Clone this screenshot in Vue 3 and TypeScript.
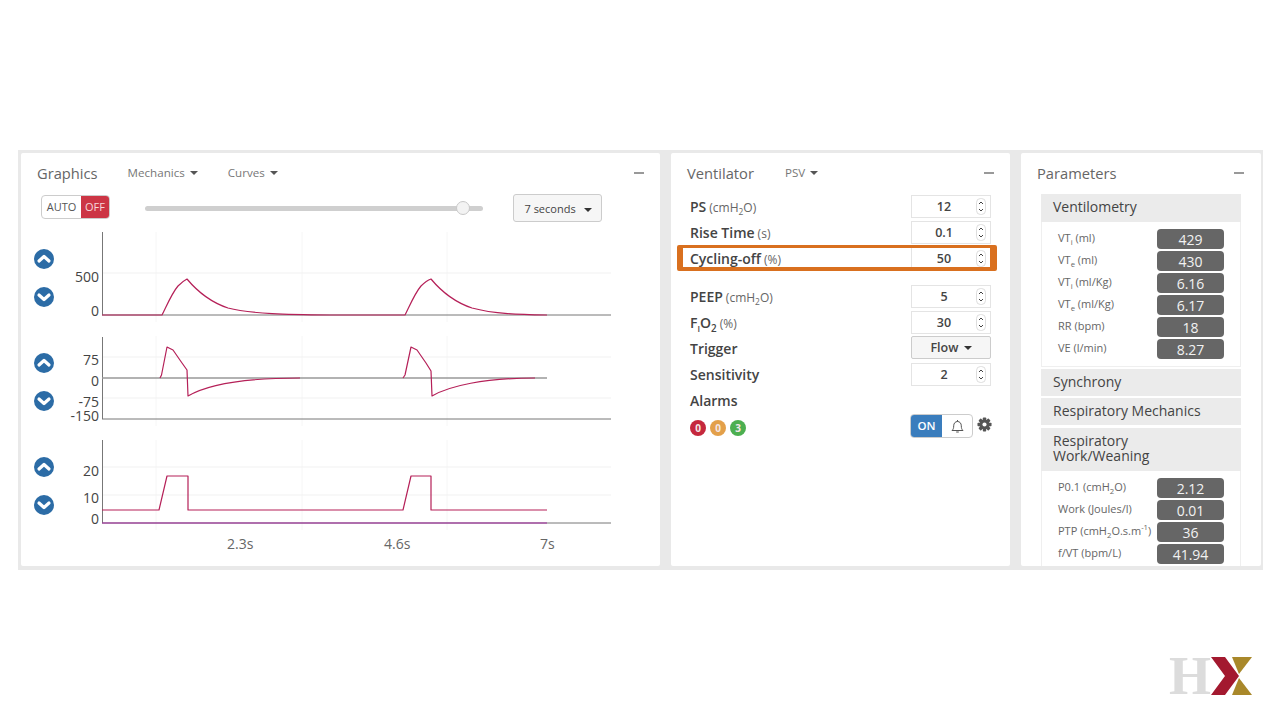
<template>
  <div class="page">
    <div class="dash">
      <section class="panel graphics">
        <header class="panel-head">
          <h2 class="panel-title">Graphics</h2>
          <span class="menu menu--mechanics">Mechanics <i class="caret"></i></span>
          <span class="menu menu--curves">Curves <i class="caret"></i></span>
          <span class="minus"></span>
        </header>

        <div class="graphics-tools">
          <div class="auto-toggle">
            <span class="auto-toggle-auto">AUTO</span>
            <span class="auto-toggle-off">OFF</span>
          </div>
          <div class="slider">
            <span class="slider-thumb"></span>
          </div>
          <button class="seconds-btn">7 seconds <i class="caret caret--dark"></i></button>
        </div>

        <div v-for="chart in charts" :key="chart.top" class="chart-row">
          <div class="chart-btns">
            <svg v-for="dir in ['M5 12 10 7.5 15 12', 'M5 8 10 12.5 15 8']" :key="dir" class="round-btn" viewBox="0 0 20 20">
              <circle cx="10" cy="10" r="10" fill="#2c6ca6" />
              <path :d="dir" fill="none" stroke="#fff" stroke-width="3.2" stroke-linecap="round" stroke-linejoin="round" />
            </svg>
          </div>
          <svg class="plot" width="580" height="104" :viewBox="`60 ${chart.top} 580 104`">
            <line v-for="x in [156, 302, 447]" :key="x" :x1="x" :x2="x" :y1="chart.top + 6" :y2="chart.top + 96" stroke="#f6f6f6" />
            <line v-for="y in chart.grid" :key="y" x1="102" x2="611" :y1="y" :y2="y" stroke="#f1f1f1" />
            <line x1="102.5" x2="102.5" :y1="chart.axisTop" :y2="chart.base" stroke="#777" />
            <line x1="102" x2="611" :y1="chart.base" :y2="chart.base" stroke="#777" />
            <line v-if="chart.zero" x1="102" x2="547" :y1="chart.zero" :y2="chart.zero" stroke="#999" stroke-width="1.6" />
            <line v-if="chart.purple" x1="102" x2="547" :y1="chart.purple" :y2="chart.purple" stroke="#a3259f" stroke-width="1.2" />
            <path :d="chart.curve" fill="none" :stroke="chart.stroke" stroke-width="1.2" stroke-linejoin="round" />
            <text v-for="t in chart.ticks" :key="t.label" x="99" :y="t.y" class="tick">{{ t.label }}</text>
          </svg>
        </div>

        <div class="time-axis">
          <span v-for="t in times" :key="t.label" class="time-label" :style="{ width: t.width + 'px' }">{{ t.label }}</span>
        </div>
      </section>

      <section class="panel ventilator">
        <header class="panel-head">
          <h2 class="panel-title">Ventilator</h2>
          <span class="menu menu--psv">PSV <i class="caret"></i></span>
          <span class="minus"></span>
        </header>

        <div class="vent-rows">
          <div
            v-for="row in ventRows"
            :key="row.name"
            class="vent-row"
            :class="{ 'vent-row--hot': row.hot, 'vent-row--gap': row.gap }"
          >
            <span class="vent-label">{{ row.name }}<sub v-if="row.nameSub" class="sub-i">{{ row.nameSub }}</sub><span v-if="row.nameTail">{{ row.nameTail }}</span><sub v-if="row.nameTailSub">{{ row.nameTailSub }}</sub><small v-if="row.unit" class="vent-unit">({{ row.unit }}<sub v-if="row.unitSub">{{ row.unitSub }}</sub>{{ row.unitTail }})</small></span>
            <div v-if="row.value" class="num-input">
              <span class="num-value">{{ row.value }}</span>
              <svg class="spin" width="10" height="17" viewBox="0 0 10 17">
                <rect x="0.5" y="0.5" width="9" height="16" rx="4" fill="#fff" stroke="#ddd" />
                <path d="M3 6 5 4 7 6M3 11 5 13 7 11" fill="none" stroke="#444" stroke-width="1" />
              </svg>
            </div>
            <button v-else-if="row.select" class="flow-btn">{{ row.select }} <i class="caret caret--dark"></i></button>
          </div>

          <div class="vent-row vent-row--alarm">
            <span class="vent-label">Alarms</span>
          </div>
          <div class="alarm-foot">
            <div class="badges">
              <span class="badge badge--red">0</span>
              <span class="badge badge--amber">0</span>
              <span class="badge badge--green">3</span>
            </div>
            <div class="bell-toggle">
              <span class="bell-toggle-on">ON</span>
              <span class="bell-toggle-bell">
                <svg width="13" height="15" viewBox="0 0 13 15">
                  <path d="M1 11.5c1.3-1.2 1.7-2.4 1.7-4.7 0-2.5 1.6-4.3 3.8-4.3s3.8 1.8 3.8 4.3c0 2.3.4 3.5 1.7 4.7zM6.5 2.500V1M5.200 13h2.600" fill="none" stroke="#555" stroke-width="1" />
                </svg>
              </span>
            </div>
            <svg class="gear" width="15" height="15" viewBox="0 0 16 16">
              <rect v-for="a in [0, 45, 90, 135]" :key="a" x="6.200" y="0.500" width="3.600" height="15" rx="0.800" fill="#555" :transform="`rotate(${a} 8 8)`" />
              <circle cx="8" cy="8" r="5.400" fill="#555" />
              <circle cx="8" cy="8" r="2.200" fill="#fff" />
            </svg>
          </div>
        </div>
      </section>

      <section class="panel parameters">
        <header class="panel-head">
          <h2 class="panel-title">Parameters</h2>
          <span class="minus"></span>
        </header>

        <div class="accordion">
          <div class="acc-head acc-head--open">Ventilometry</div>
          <div class="acc-body acc-body--first">
            <div v-for="p in ventilometry" :key="p.id" class="param-row">
              <span class="param-label">{{ p.name }}<sub v-if="p.sub">{{ p.sub }}</sub> ({{ p.unit }}<sub v-if="p.unitSub">{{ p.unitSub }}</sub>{{ p.tail }}<sup v-if="p.sup">{{ p.sup }}</sup>)</span>
              <span class="param-value">{{ p.value }}</span>
            </div>
          </div>
          <div class="acc-head acc-head--next">Synchrony</div>
          <div class="acc-head acc-head--next">Respiratory Mechanics</div>
          <div class="acc-head acc-head--next acc-head--tall">Respiratory<br />Work/Weaning</div>
          <div class="acc-body">
            <div v-for="p in work" :key="p.id" class="param-row">
              <span class="param-label">{{ p.name }}<sub v-if="p.sub">{{ p.sub }}</sub> ({{ p.unit }}<sub v-if="p.unitSub">{{ p.unitSub }}</sub>{{ p.tail }}<sup v-if="p.sup">{{ p.sup }}</sup>)</span>
              <span class="param-value">{{ p.value }}</span>
            </div>
          </div>
        </div>
      </section>
    </div>

    <footer class="brand">
      <span class="brand-h">H</span>
      <svg class="brand-x" width="42" height="38" viewBox="0 0 42 38">
        <polygon points="0,0 14,0 28,19 14,38 0,38 14,19" fill="#a3192f" />
        <polygon points="21,0 41,0 28,17" fill="#a9882a" />
        <polygon points="28,21 41,38 21,38" fill="#a9882a" />
      </svg>
    </footer>
  </div>
</template>

<script setup lang="ts">
interface Tick {
  label: string;
  y: number;
}

interface Chart {
  top: number;
  axisTop: number;
  base: number;
  zero?: number;
  purple?: number;
  grid: number[];
  ticks: Tick[];
  curve: string;
  stroke: string;
}

interface VentRow {
  name: string;
  nameSub?: string;
  nameTail?: string;
  nameTailSub?: string;
  unit?: string;
  unitSub?: string;
  unitTail?: string;
  value?: string;
  select?: string;
  hot?: boolean;
  gap?: boolean;
}

interface Param {
  id: string;
  name: string;
  sub?: string;
  unit: string;
  unitSub?: string;
  tail?: string;
  sup?: string;
  value: string;
}

const charts: Chart[] = [
  {
    top: 226,
    axisTop: 232,
    base: 315,
    grid: [273],
    ticks: [
      { label: "500", y: 282 },
      { label: "0", y: 316 },
    ],
    curve:
      "M102 315H162C167 305 172 293 178 286C182 282 185 280 187 279C197 291 210 302 228 308C250 314 290 314.500 330 315H405C410 305 415 293 421 286C425 282 428 280 431 279C441 291 454 302 472 308C494 314 520 314.500 547 315",
    stroke: "#b52058",
  },
  {
    top: 330,
    axisTop: 337,
    base: 419,
    zero: 378,
    grid: [357, 398],
    ticks: [
      { label: "75", y: 365 },
      { label: "0", y: 386 },
      { label: "-75", y: 407 },
      { label: "-150", y: 421 },
    ],
    curve:
      "M160 378 161.500 375 167 347 173 350 182 363 187 370 188 396C205 386 240 378 300 378M403 378 405 375 411 347 417 350 426 363 431 371 432 396C449 386 484 378 535 378",
    stroke: "#b52058",
  },
  {
    top: 434,
    axisTop: 440,
    base: 523,
    purple: 523,
    grid: [467, 495],
    ticks: [
      { label: "20", y: 476 },
      { label: "10", y: 503 },
      { label: "0", y: 524 },
    ],
    curve: "M102 510H159L167 476H188V510H403L411 476H431V510H547",
    stroke: "#b52058",
  },
];

// widths are the distance between label starts on the time axis
const times = [
  { label: "2.3s", width: 157 },
  { label: "4.6s", width: 156 },
  { label: "7s", width: 40 },
];

const ventRows: VentRow[] = [
  { name: "PS", unit: "cmH", unitSub: "2", unitTail: "O", value: "12" },
  { name: "Rise Time", unit: "s", value: "0.1" },
  { name: "Cycling-off", unit: "%", value: "50", hot: true },
  { name: "PEEP", unit: "cmH", unitSub: "2", unitTail: "O", value: "5", gap: true },
  { name: "F", nameSub: "I", nameTail: "O", nameTailSub: "2", unit: "%", value: "30" },
  { name: "Trigger", select: "Flow" },
  { name: "Sensitivity", value: "2" },
];

const ventilometry: Param[] = [
  { id: "vti", name: "VT", sub: "i", unit: "ml", value: "429" },
  { id: "vte", name: "VT", sub: "e", unit: "ml", value: "430" },
  { id: "vtik", name: "VT", sub: "i", unit: "ml/Kg", value: "6.16" },
  { id: "vtek", name: "VT", sub: "e", unit: "ml/Kg", value: "6.17" },
  { id: "rr", name: "RR", unit: "bpm", value: "18" },
  { id: "ve", name: "VE", unit: "l/min", value: "8.27" },
];

const work: Param[] = [
  { id: "p01", name: "P0.1", unit: "cmH", unitSub: "2", tail: "O", value: "2.12" },
  { id: "work", name: "Work", unit: "Joules/l", value: "0.01" },
  { id: "ptp", name: "PTP", unit: "cmH", unitSub: "2", tail: "O.s.m", sup: "-1", value: "36" },
  { id: "fvt", name: "f/VT", unit: "bpm/L", value: "41.94" },
];
</script>

<style>
html,
body {
  margin: 0;
  background: #fff;
}
</style>

<style scoped>
.page {
  width: 1280px;
  height: 720px;
  box-sizing: border-box;
  padding: 150px 0 0 18px;
  overflow: hidden;
  font-family: "Open Sans", "Noto Sans", sans-serif;
  color: #444;
}

.dash {
  display: flex;
  gap: 11px;
  width: 1245px;
  height: 420px;
  box-sizing: border-box;
  padding: 3px 2px 4px 3px;
  background: #e9e9e9;
}

.panel {
  height: 413px;
  box-sizing: border-box;
  background: #fff;
  border-radius: 2px;
  overflow: hidden;
}

.graphics {
  width: 639px;
  padding: 0 16px;
}

.ventilator {
  width: 339px;
  padding: 0 16px;
}

.parameters {
  width: 240px;
  padding: 0 17px 0 16px;
}

.panel-head {
  display: flex;
  align-items: center;
  height: 39px;
}

.panel-title {
  margin: 0;
  font-size: 14.700px;
  font-weight: 400;
  color: #666;
}

.menu {
  font-size: 11.600px;
  color: #777;
}

.menu--mechanics {
  margin-left: 30px;
}

.menu--curves {
  margin-left: 30px;
}

.menu--psv {
  margin-left: 31px;
}

.caret {
  display: inline-block;
  width: 0;
  height: 0;
  margin-left: 2px;
  vertical-align: 2px;
  border-top: 4px solid #555;
  border-left: 4px solid transparent;
  border-right: 4px solid transparent;
}

.caret--dark {
  border-top-color: #333;
}

.minus {
  width: 10px;
  height: 2px;
  margin-left: auto;
  background: #999;
}

.graphics-tools {
  display: flex;
  align-items: center;
  height: 28px;
  padding-left: 4px;
  margin: 2px 0 4px;
}

.auto-toggle {
  display: flex;
  width: 69px;
  height: 24px;
  box-sizing: border-box;
  margin-top: -2px;
  border: 1px solid #ccc;
  border-radius: 4px;
  overflow: hidden;
  font-size: 11px;
  line-height: 22px;
}

.auto-toggle-auto {
  width: 39px;
  text-align: center;
  color: #555;
}

.auto-toggle-off {
  flex: 1;
  text-align: center;
  background: #cc3545;
  color: #f6d8db;
}

.slider {
  position: relative;
  width: 338px;
  height: 5px;
  margin-left: 35px;
  background: #cfcfcf;
  border-radius: 3px;
}

.slider-thumb {
  position: absolute;
  left: 311px;
  top: -4.500px;
  width: 14px;
  height: 14px;
  box-sizing: border-box;
  background: #f3f3f3;
  border: 1px solid #c8c8c8;
  border-radius: 50%;
}

.seconds-btn {
  width: 89px;
  height: 28px;
  margin-left: 30px;
  padding: 0 0 0 1px;
  background: #f6f6f6;
  border: 1px solid #ccc;
  border-radius: 3px;
  font-family: inherit;
  font-size: 11px;
  color: #444;
}

.seconds-btn .caret {
  margin-left: 5px;
  vertical-align: 1px;
}

.chart-row {
  display: flex;
  align-items: center;
  height: 104px;
}

.chart-btns {
  display: flex;
  flex: none;
  flex-direction: column;
  gap: 18px;
  width: 20px;
  margin: 0 6px 0 -3px;
}

.round-btn {
  width: 20px;
  height: 20px;
}

.plot {
  display: block;
  flex: none;
}

.tick {
  font-size: 14px;
  fill: #444;
  text-anchor: end;
}

.time-axis {
  display: flex;
  margin: -3px 0 0 190px;
  line-height: 18px;
}

.time-label {
  flex: none;
  font-size: 14px;
  color: #666;
}

.vent-rows {
  margin-top: 1px;
  padding-left: 3px;
}

.vent-row {
  position: relative;
  display: flex;
  align-items: center;
  justify-content: space-between;
  height: 26px;
  padding-right: 3px;
}

.vent-row--gap {
  margin-top: 12px;
}

/* orange highlight sits over the row */
.vent-row--hot::after {
  content: "";
  position: absolute;
  inset: 0 -3px 0 -13px;
  border-style: solid;
  border-color: #d9701f;
  border-width: 3px 7px 4px 6px;
  border-radius: 2px;
  pointer-events: none;
}

.vent-label {
  font-size: 14px;
  font-weight: 600;
  color: #444;
}

.vent-unit {
  margin-left: 3px;
  font-size: 12px;
  font-weight: 400;
  color: #666;
}

sub,
sup {
  font-size: 70%;
  line-height: 0;
}

.sub-i {
  font-size: 60%;
}

.num-input {
  position: relative;
  display: flex;
  align-items: center;
  justify-content: center;
  width: 80px;
  height: 23px;
  box-sizing: border-box;
  border: 1px solid #e4e4e4;
}

.num-value {
  width: 66px;
  margin-right: 14px;
  text-align: center;
  font-size: 12.500px;
  font-weight: 600;
  color: #444;
}

.spin {
  position: absolute;
  right: 4px;
  top: 2px;
}

.flow-btn {
  width: 80px;
  height: 23px;
  margin-top: -2px;
  padding: 0;
  background: #f6f6f6;
  border: 1px solid #ccc;
  border-radius: 2px;
  font-family: inherit;
  font-size: 12.500px;
  font-weight: 600;
  color: #444;
}

.alarm-foot {
  display: flex;
  align-items: flex-start;
  margin-top: 1px;
}

.badges {
  display: flex;
  gap: 4px;
  margin-top: 6px;
}

.badge {
  width: 16px;
  height: 16px;
  border-radius: 50%;
  text-align: center;
  font-size: 10px;
  font-weight: 700;
  line-height: 16px;
  color: #f3e7e7;
}

.badge--red {
  background: #c5283d;
}

.badge--amber {
  background: #e3a04a;
}

.badge--green {
  background: #4caf50;
}

.bell-toggle {
  display: flex;
  width: 63px;
  height: 24px;
  box-sizing: border-box;
  margin-left: 164px;
  border: 1px solid #ccc;
  border-radius: 4px;
  overflow: hidden;
}

.bell-toggle-on {
  width: 31px;
  background: #3a7dbd;
  color: #fff;
  text-align: center;
  font-size: 11.500px;
  font-weight: 600;
  line-height: 22px;
}

.bell-toggle-bell {
  display: flex;
  flex: 1;
  align-items: center;
  justify-content: center;
}

.gear {
  margin: 3px 0 0 4px;
}

.accordion {
  margin: 2px 3px 0 4px;
}

.acc-head {
  height: 27px;
  box-sizing: border-box;
  padding-left: 12px;
  background: #ebebeb;
  font-size: 14px;
  line-height: 26px;
  color: #444;
}

.acc-head--open {
  height: 28px;
}

.acc-head--next {
  margin-top: 2px;
}

.acc-head--tall {
  height: 43px;
  margin-top: 3px;
  padding-top: 5px;
  line-height: 15px;
}

.acc-body {
  box-sizing: border-box;
  padding: 7px 16px 2px;
  border: 1px solid #efefef;
  border-top: 0;
}

.acc-body--first {
  height: 145px;
}

.param-row {
  display: flex;
  align-items: flex-start;
  justify-content: space-between;
  height: 22px;
}

.param-label {
  font-size: 11px;
  color: #666;
  line-height: 18px;
  white-space: nowrap;
}

.param-value {
  flex: none;
  width: 67px;
  height: 20px;
  background: #666;
  border-radius: 4px;
  text-align: center;
  font-size: 14px;
  line-height: 21px;
  color: #f2f2f2;
}

.brand {
  display: flex;
  align-items: center;
  justify-content: flex-end;
  height: 38px;
  margin-top: 87px;
  padding-right: 27px;
}

.brand-h {
  font-family: "Liberation Serif", serif;
  font-size: 54px;
  font-weight: 700;
  line-height: 38px;
  color: #dcdcdc;
}

.brand-x {
  flex: none;
}
</style>
